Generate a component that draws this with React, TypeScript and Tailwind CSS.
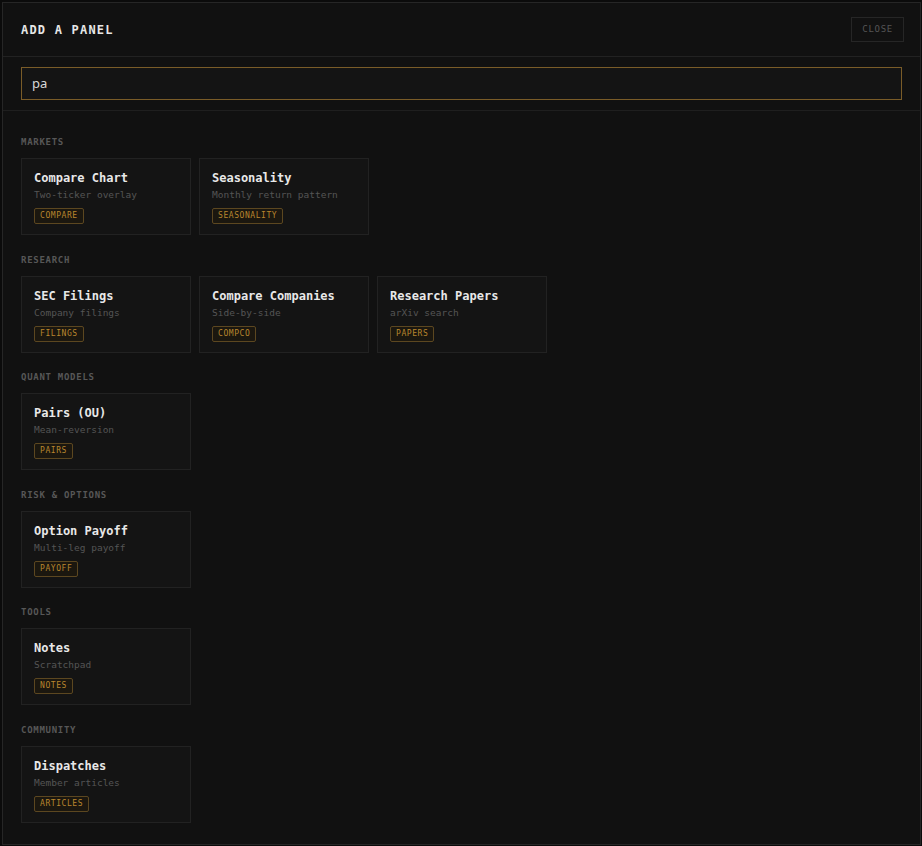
import { useState } from 'react'

type Panel = { title: string; desc: string; tag: string }
type Group = { label: string; panels: Panel[] }

const groups: Group[] = [
  {
    label: 'Markets',
    panels: [
      { title: 'Compare Chart', desc: 'Two-ticker overlay', tag: 'Compare' },
      { title: 'Seasonality', desc: 'Monthly return pattern', tag: 'Seasonality' },
    ],
  },
  {
    label: 'Research',
    panels: [
      { title: 'SEC Filings', desc: 'Company filings', tag: 'Filings' },
      { title: 'Compare Companies', desc: 'Side-by-side', tag: 'Compco' },
      { title: 'Research Papers', desc: 'arXiv search', tag: 'Papers' },
    ],
  },
  {
    label: 'Quant Models',
    panels: [{ title: 'Pairs (OU)', desc: 'Mean-reversion', tag: 'Pairs' }],
  },
  {
    label: 'Risk & Options',
    panels: [{ title: 'Option Payoff', desc: 'Multi-leg payoff', tag: 'Payoff' }],
  },
  {
    label: 'Tools',
    panels: [{ title: 'Notes', desc: 'Scratchpad', tag: 'Notes' }],
  },
  {
    label: 'Community',
    panels: [{ title: 'Dispatches', desc: 'Member articles', tag: 'Articles' }],
  },
]

function PanelCard({ panel }: { panel: Panel }) {
  return (
    <button className="flex h-[77px] w-[170px] flex-col items-start border border-[#222222] bg-[#141414] px-[12px] pt-[12px] text-left hover:border-[#3a3a3a]">
      <span className="text-[12px] font-bold leading-[14px] text-[#e8e8e8]">{panel.title}</span>
      <span className="mt-[4px] text-[9.5px] leading-[12px] text-[#555555]">{panel.desc}</span>
      <span className="mt-[7px] flex h-[16px] items-center rounded-[2px] border border-[#5c4720] bg-[#1b170f] px-[5px] text-[8px] uppercase leading-none tracking-[0.07em] text-[#b8862e]">
        {panel.tag}
      </span>
    </button>
  )
}

export default function App() {
  const [query, setQuery] = useState('pa')

  return (
    <div className="h-screen bg-[#0b0b0b] pb-px pl-[2px] pr-px pt-[2px] font-['DejaVu_Sans_Mono',monospace]">
      <div className="flex h-full flex-col overflow-hidden border border-[#262626] bg-[#111111]">
        <div className="flex h-[54px] shrink-0 items-center justify-between border-b border-[#222222] pl-[18px] pr-[16px]">
          <h1 className="text-[12px] font-bold tracking-[0.1em] text-[#e6e6e6]">ADD A PANEL</h1>
          <button className="h-[25px] border border-[#262626] px-[10px] text-[9px] tracking-[0.08em] text-[#555555]">
            CLOSE
          </button>
        </div>

        <div className="shrink-0 border-b border-[#1f1f1f] px-[18px] py-[10px]">
          <div className="flex h-[33px] items-center border border-[#7a5c28] bg-[#141414] px-[10px]">
            <input
              value={query}
              onChange={(e) => setQuery(e.target.value)}
              className="w-full bg-transparent font-['Noto_Sans',sans-serif] text-[13px] text-[#d8d8d8] outline-none"
            />
          </div>
        </div>

        <div className="flex flex-col gap-[18.5px] overflow-y-auto px-[18px] pt-[25px]">
          {groups.map((group) => (
            <section key={group.label}>
              <h2 className="text-[9px] font-bold uppercase leading-[12px] tracking-[0.08em] text-[#575757]">
                {group.label}
              </h2>
              <div className="mt-[10px] flex flex-wrap gap-[8px]">
                {group.panels.map((panel) => (
                  <PanelCard key={panel.tag} panel={panel} />
                ))}
              </div>
            </section>
          ))}
        </div>
      </div>
    </div>
  )
}
